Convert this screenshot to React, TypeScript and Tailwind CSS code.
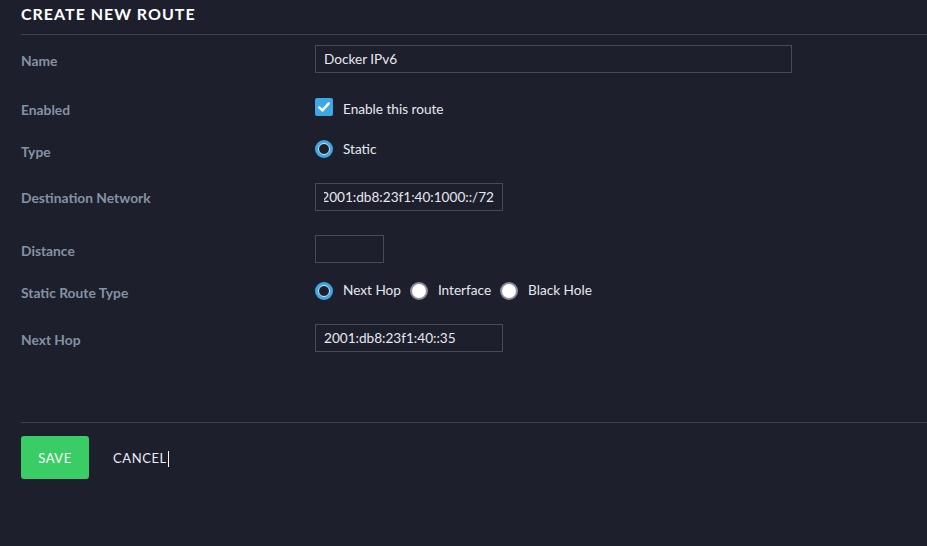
import React from "react";

const BG = "bg-[#1d1f2d]";

function Label({ children, pt }: { children: React.ReactNode; pt: string }) {
  return (
    <div className={`w-[294px] shrink-0 text-[13.8px] leading-[16px] font-bold text-[#8592a4] ${pt}`}>
      {children}
    </div>
  );
}

function TextBox({ value, width, right }: { value: string; width: string; right?: boolean }) {
  return (
    <div className={`${width} h-[28px] border border-[#464c57] px-[8px] flex items-center`}>
      <div
        className={`flex-1 flex overflow-hidden whitespace-nowrap text-[13.6px] leading-[16px] text-[#e6e9ee] ${
          right ? "justify-end" : ""
        }`}
      >
        <span className="shrink-0">{value}</span>
      </div>
    </div>
  );
}

function Radio({ checked, label }: { checked?: boolean; label: string }) {
  return (
    <div className="flex items-center">
      {checked ? (
        <span className="w-[18px] h-[18px] rounded-full bg-[#3ea8e6] flex items-center justify-center">
          <span className="w-[12px] h-[12px] rounded-full border border-[#cfe9fa] bg-[#1d1f2d]" />
        </span>
      ) : (
        <span className="w-[18px] h-[18px] rounded-full bg-white border-2 border-[#8d8d93]" />
      )}
      <span className="ml-[10px] text-[13.6px] text-[#e6e9ee]">{label}</span>
    </div>
  );
}

export default function App() {
  return (
    <div className={`w-[927px] h-[546px] ${BG} font-['Lato',sans-serif] pl-[21px] overflow-hidden`}>
      {/* header */}
      <div className="h-[35px] pt-[4px] border-b border-[#3c4349]">
        <h1 className="text-[16px] leading-[20px] font-bold text-white tracking-[1px]">CREATE NEW ROUTE</h1>
      </div>

      <div className="pt-[10px]">
        <div className="flex h-[53px]">
          <Label pt="pt-[8px]">Name</Label>
          <TextBox value="Docker IPv6" width="w-[477px]" />
        </div>

        <div className="flex h-[43px]">
          <Label pt="pt-[4px]">Enabled</Label>
          <div className="flex items-start">
            <span className="w-[18px] h-[18px] rounded-[2px] bg-[#3ea8e6] flex items-center justify-center">
              <svg width="14" height="14" viewBox="0 0 14 14" fill="none">
                <polyline points="2.2,7.4 5.4,10.4 11.8,3.4" stroke="white" strokeWidth="2.4" strokeLinecap="round" strokeLinejoin="round" />
              </svg>
            </span>
            <span className="ml-[10px] mt-[3px] text-[13.6px] leading-[16px] text-[#e6e9ee]">Enable this route</span>
          </div>
        </div>

        <div className="flex h-[42px]">
          <Label pt="pt-[3px]">Type</Label>
          <div className="h-[16px] flex items-center">
            <Radio checked label="Static" />
          </div>
        </div>

        <div className="flex h-[52px]">
          <Label pt="pt-[7px]">Destination Network</Label>
          <TextBox value="2001:db8:23f1:40:1000::/72" width="w-[188px]" right />
        </div>

        <div className="flex h-[47px]">
          <Label pt="pt-[8px]">Distance</Label>
          <TextBox value="" width="w-[69px]" />
        </div>

        <div className="flex h-[42px]">
          <Label pt="pt-[3px]">Static Route Type</Label>
          <div className="h-[17px] flex items-center gap-[9px]">
            <Radio checked label="Next Hop" />
            <Radio label="Interface" />
            <Radio label="Black Hole" />
          </div>
        </div>

        <div className="flex h-[28px]">
          <Label pt="pt-[8px]">Next Hop</Label>
          <TextBox value="2001:db8:23f1:40::35" width="w-[188px]" />
        </div>
      </div>

      <div className="mt-[70px] border-t border-[#3c4349]" />

      <div className="mt-[13px] flex items-center">
        <button className="w-[68px] h-[43px] pt-[2px] rounded-[3px] bg-[#3acd66] text-white text-[13px] tracking-[0.5px]">
          SAVE
        </button>
        <span className="ml-[24px] mt-[2px] text-[13px] text-[#e8edf3] tracking-[0.6px]">CANCEL</span>
        <span className="w-px h-[16px] mt-[2px] bg-white ml-px" />
      </div>
    </div>
  );
}
